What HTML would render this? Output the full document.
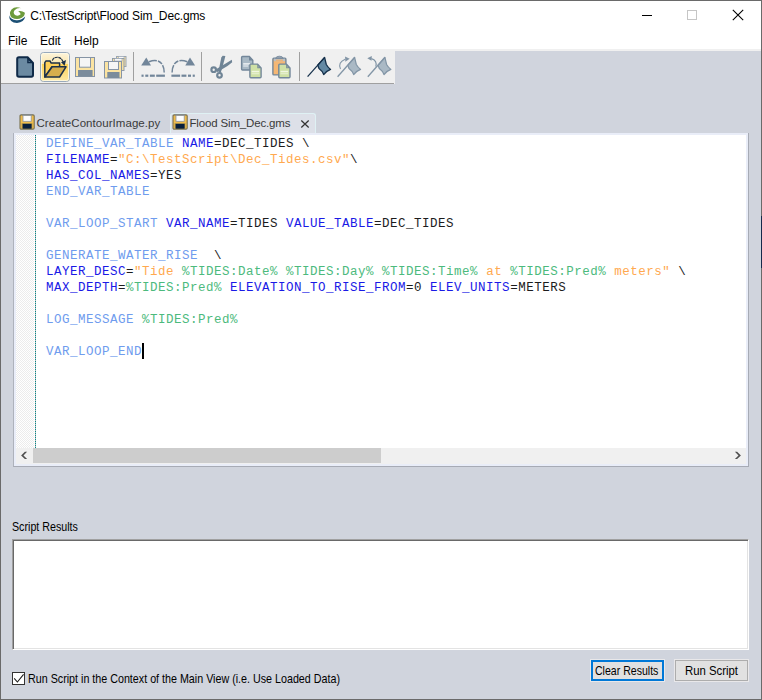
<!DOCTYPE html>
<html>
<head>
<meta charset="utf-8">
<title>Flood Sim_Dec.gms</title>
<style>
html,body{margin:0;padding:0;}
body{width:762px;height:700px;overflow:hidden;position:relative;background:#d0d4dd;font-family:"Liberation Sans",sans-serif;}
.abs{position:absolute;}
#win{position:absolute;left:0;top:0;width:762px;height:700px;background:#d0d4dd;overflow:hidden;}
.bd{position:absolute;background:#6a6a6a;}
#title{position:absolute;left:1px;top:1px;width:760px;height:30px;background:#fff;}
#title .txt{position:absolute;left:29.2px;top:8px;font-size:12px;line-height:15px;color:#000;white-space:nowrap;letter-spacing:-0.14px;}
#menu{position:absolute;left:1px;top:31px;width:760px;height:18px;background:#fff;}
#menu span{position:absolute;top:3px;font-size:12px;line-height:15px;color:#000;}
#tbline{position:absolute;left:1px;top:49px;width:760px;height:2px;background:#f0f0f0;}
#toolbar{position:absolute;left:1px;top:49px;width:394px;height:35px;background:#f0f0f0;}
#tbbot{position:absolute;left:1px;top:83px;width:393px;height:1px;background:#a0a0a0;}
.sep{position:absolute;top:52px;width:1px;height:29px;background:#a0a0a0;}
.tab{position:absolute;font-size:11.5px;line-height:15px;color:#3a3a3a;white-space:nowrap;}
#acttab{position:absolute;left:170px;top:113px;width:144px;height:20px;border:1px solid #dff1f4;border-bottom:none;border-radius:3px 3px 0 0;background:#dde0e8;}
#editor{position:absolute;left:13px;top:133px;width:734px;height:333px;background:#e9edf8;border-left:1px solid #aeb2bc;border-right:1px solid #a7abb5;border-bottom:1px solid #a7abb5;}
#edin{position:absolute;left:2px;top:2px;width:730px;height:329px;background:#fff;overflow:hidden;}
#gutter{position:absolute;left:0;top:0;width:18px;height:313px;background:conic-gradient(#ececec 25%,#fff 0 50%,#ececec 0 75%,#fff 0);background-size:2px 2px;}
#gline{position:absolute;left:19px;top:0;width:1px;height:313px;background:repeating-linear-gradient(to bottom,#008b8b 0,#008b8b 1px,#c4bcbc 1px,#c4bcbc 2px);}
#code{position:absolute;left:30px;top:1px;font-family:"Liberation Mono",monospace;font-size:12.5px;letter-spacing:0.5px;line-height:16px;white-space:pre;color:#1c1c1c;}
.k{color:#6f9cee;}
.p{color:#1a1ae6;}
.s{color:#ffa94f;}
.v{color:#4cba7d;}
#caret{position:absolute;left:126px;top:208px;width:2px;height:16px;background:#000;}
#hscroll{position:absolute;left:0;top:313px;width:730px;height:16px;background:#f0f0f0;}
#hthumb{position:absolute;left:17px;top:0;width:348px;height:15px;background:#cdcdcd;}
#lbl{position:absolute;left:11.5px;top:520px;font-size:12.4px;line-height:15px;color:#000;white-space:nowrap;transform:scaleX(0.862);transform-origin:0 0;}
#results{position:absolute;left:12px;top:539px;width:735px;height:109px;background:#fff;border:1px solid;border-color:#a0a0a0 #fff #fff #a0a0a0;box-shadow:inset 1px 1px 0 #696969,inset -1px -1px 0 #e3e3e3;}
#chk{position:absolute;left:12px;top:672px;width:11px;height:11px;border:1px solid #333;background:#fff;}
#chklbl{position:absolute;left:28px;top:672px;font-size:12.4px;line-height:15px;color:#000;white-space:nowrap;transform:scaleX(0.865);transform-origin:0 0;}
.btn{position:absolute;top:659px;height:21px;background:#e1e1e1;border:1px solid #e9e8ea;}
.btn span{position:absolute;top:4px;font-size:12.4px;line-height:15px;color:#000;white-space:nowrap;transform-origin:0 0;}
</style>
</head>
<body>
<div id="win">
  <div id="title">
    <div class="txt">C:\TestScript\Flood Sim_Dec.gms</div>
    <svg class="abs" style="left:7px;top:5px" width="20" height="20" viewBox="8 6 20 20">
      <path d="M9,15.2 Q9.3,22.8 17,23 Q24.2,22.6 25.2,16.6 Q21.5,20.6 16.2,20.2 Q10.8,19.6 9,15.2 Z" fill="#1b4f74"/>
      <path d="M21.4,8.2 Q15.2,5.6 11.5,9.4 Q8.4,13.6 11.6,17.4 Q16.6,20.6 21.8,17.8 Q25.6,15.2 24.6,12.6 Q22,10.4 18.2,11.2 Q21.2,13 20.4,14.6 Q18,16.6 15,15 Q12.6,13 14.6,10.2 Q17.2,7.6 21.4,8.2 Z" fill="#6d9b3c"/>
    </svg>
    <div class="abs" style="left:641px;top:14px;width:10px;height:1px;background:#000"></div>
    <div class="abs" style="left:686px;top:9px;width:8px;height:8px;border:1px solid #c6c6c6"></div>
    <svg class="abs" style="left:731px;top:8px" width="12" height="12" viewBox="0 0 12 12"><path d="M0.8,0.8 L11.2,11.2 M11.2,0.8 L0.8,11.2" stroke="#000" stroke-width="1.1" fill="none"/></svg>

  </div>
  <div id="menu">
    <span style="left:7px">File</span><span style="left:39px">Edit</span><span style="left:73px">Help</span>
  </div>
  <div id="tbline"></div>
  <div id="toolbar"></div><div id="tbbot"></div>
  <svg class="abs" style="left:0;top:50px" width="396" height="34" viewBox="0 50 396 34">
  <defs>
    <linearGradient id="hot" x1="0" y1="0" x2="0" y2="1">
      <stop offset="0" stop-color="#fdf4dc"/>
      <stop offset="0.40" stop-color="#fbe8b0"/>
      <stop offset="0.40" stop-color="#fdd256"/>
      <stop offset="1" stop-color="#fde9a6"/>
    </linearGradient>
  </defs>
  <!-- new -->
  <path d="M19,57.3 L27.6,57.3 L33,62.9 L33,75 Q33,76.7 31.3,76.7 L19,76.7 Q17.2,76.7 17.2,75 L17.2,59 Q17.2,57.3 19,57.3 Z" fill="#6b8aa2" stroke="#0f2a48" stroke-width="2" stroke-linejoin="round"/>
  <path d="M27.2,57.3 L27.2,63.3 L33,63.3 Z" fill="#0f2a48"/>
  <path d="M28.6,60.3 L28.6,62 L30.4,62 Z" fill="#5d7c96"/>
  <!-- open (hot) -->
  <rect x="40.5" y="52.5" width="29" height="29" rx="3" fill="url(#hot)" stroke="#98a9bc"/>
  <rect x="41.5" y="53.5" width="27" height="27" rx="2" fill="none" stroke="#fffbe9" stroke-opacity="0.8"/>
  <path d="M44.8,77 L44.8,62.6 L46,60.9 L50,60.9 L51,62.9 L59.6,62.9 L59.6,66.8 L52,66.8 Z" fill="#fdcf58" stroke="#1c3049" stroke-width="1.5" stroke-linejoin="round"/>
  <path d="M44.8,77 L52.2,66.8 L66,66.8 L59.6,77 Z" fill="#d6ae4e" stroke="#1c3049" stroke-width="1.5" stroke-linejoin="round"/>
  <path d="M52.3,60.6 Q53.4,57.2 57.4,57.2 Q61.4,57.4 63.2,62" fill="none" stroke="#1c3049" stroke-width="1.15" stroke-dasharray="3.2 0.5"/>
  <path d="M61,62.2 L66.1,60 L64.6,65.8 Z" fill="#1c3049"/>
  <!-- save (disabled) -->
  <rect x="75.5" y="57.5" width="19" height="19" fill="#fbe3a1" stroke="#8694a5"/>
  <rect x="79.5" y="57.5" width="11" height="9.7" fill="#f5f5f5" stroke="#8694a5"/>
  <rect x="78" y="70" width="14.6" height="6.5" fill="#7b8c9c"/>
  <!-- save all (disabled) -->
  <rect x="116.5" y="56.5" width="9.5" height="10" fill="#f4dfa8" stroke="#9aa5b2"/>
  <rect x="118.5" y="56.5" width="5.5" height="2" fill="#f8f8f8" stroke="#9aa5b2" stroke-width="0.6"/>
  <rect x="112.5" y="58.5" width="11.5" height="12" fill="#f7e0a0" stroke="#8f9cab"/>
  <rect x="114.5" y="58.5" width="7.5" height="2.5" fill="#f8f8f8" stroke="#8f9cab" stroke-width="0.6"/>
  <rect x="104.5" y="61.5" width="17" height="16.5" fill="#fbe3a1" stroke="#8694a5"/>
  <rect x="108.5" y="61.5" width="10" height="8" fill="#f5f5f5" stroke="#8694a5"/>
  <rect x="107.3" y="72" width="12.2" height="6" fill="#7b8c9c"/>
  <!-- undo -->
  <g fill="#72869a">
    <path d="M141.2,65.6 L146.3,57.6 L151,65.6 Z"/>
    <rect x="141.5" y="74.6" width="2.1" height="2.2"/>
    <rect x="145.3" y="74.6" width="3" height="2.2"/>
    <rect x="149.9" y="74.6" width="4.9" height="2.2"/>
    <rect x="156.2" y="74.6" width="8.7" height="2.2"/>
  </g>
  <path d="M149,61.8 Q157,58.5 161.5,63.5 Q164.3,67 164.2,72.6" fill="none" stroke="#72869a" stroke-width="1.5" stroke-dasharray="8 1.2 5 1.2 9"/>
  <!-- redo -->
  <g fill="#72869a">
    <path d="M195.1,65.6 L190,57.6 L185.3,65.6 Z"/>
    <rect x="192.7" y="74.6" width="2.1" height="2.2"/>
    <rect x="188" y="74.6" width="3" height="2.2"/>
    <rect x="181.5" y="74.6" width="4.9" height="2.2"/>
    <rect x="171.4" y="74.6" width="8.7" height="2.2"/>
  </g>
  <path d="M187.3,61.8 Q179.3,58.5 174.8,63.5 Q172,67 172.1,72.6" fill="none" stroke="#72869a" stroke-width="1.5" stroke-dasharray="8 1.2 5 1.2 9"/>
  <!-- cut -->
  <g fill="#6f8496">
    <path d="M221.3,57.4 L222.6,55.8 L225.4,56 L222.4,67.5 L220.6,73 L218.3,72.3 Z"/>
    <path d="M231.8,59.7 L232.2,62.3 L227.5,66 L217,72.2 L216,69.3 L224,64.5 Z"/>
  </g>
  <circle cx="213.7" cy="69.7" r="2.3" fill="none" stroke="#6f8496" stroke-width="2.2"/>
  <circle cx="219.5" cy="75.3" r="2.3" fill="none" stroke="#6f8496" stroke-width="2.2"/>
  <!-- copy -->
  <path d="M242.5,56.5 L249.3,56.5 L252.8,60.3 L252.8,69 Q252.8,70 251.8,70 L242.5,70 Q241.6,70 241.6,69 L241.6,57.5 Q241.6,56.5 242.5,56.5 Z" fill="#a9b9c5" stroke="#73879a" stroke-width="1.4"/>
  <path d="M249,56.5 L249,60.6 L252.8,60.6 Z" fill="#73879a"/>
  <rect x="243.2" y="63.2" width="7" height="1.4" fill="#f2f5f7"/>
  <rect x="243.2" y="65.4" width="5" height="1.2" fill="#e3e9ee"/>
  <path d="M250.8,64.1 L257.6,64.1 L261.1,67.9 L261.1,76.8 Q261.1,77.8 260.1,77.8 L250.8,77.8 Q249.9,77.8 249.9,76.8 L249.9,65.1 Q249.9,64.1 250.8,64.1 Z" fill="#cfe1a6" stroke="#73879a" stroke-width="1.4"/>
  <path d="M257.3,64.1 L257.3,68.2 L261.1,68.2 Z" fill="#73879a"/>
  <path d="M258.3,66.3 L258.3,67.3 L259.3,67.3 Z" fill="#cfe1a6"/>
  <rect x="251.6" y="70.8" width="7.6" height="1.5" fill="#f0f6e2"/>
  <rect x="251.6" y="73" width="7.6" height="1.3" fill="#e3eecb"/>
  <!-- paste -->
  <rect x="272.9" y="58.3" width="13" height="16.6" rx="1" fill="#f5b774" stroke="#73879a" stroke-width="1.4"/>
  <rect x="274" y="58.6" width="11" height="2.6" fill="#b8c1c9"/>
  <rect x="275.8" y="59.6" width="7.2" height="1.2" fill="#f0b06c"/>
  <path d="M275.6,58.4 Q276,56.2 279.4,56.2 Q282.8,56.2 283.2,58.4 Z" fill="#93a3b1" stroke="#73879a" stroke-width="0.8"/>
  <path d="M279.7,64.1 L286.5,64.1 L290,67.9 L290,76.8 Q290,77.8 289,77.8 L279.7,77.8 Q278.8,77.8 278.8,76.8 L278.8,65.1 Q278.8,64.1 279.7,64.1 Z" fill="#cfe1a6" stroke="#73879a" stroke-width="1.4"/>
  <path d="M286.2,64.1 L286.2,68.2 L290,68.2 Z" fill="#73879a"/>
  <path d="M287.2,66.3 L287.2,67.3 L288.2,67.3 Z" fill="#cfe1a6"/>
  <rect x="280.5" y="70.8" width="7.6" height="1.5" fill="#f0f6e2"/>
  <rect x="280.5" y="73" width="7.6" height="1.3" fill="#e3eecb"/>
  <!-- flag 1 -->
  <path d="M324.6,57.4 L326.3,64.5 Q327.5,67 330.6,69.4 Q326.5,70.8 323.7,74.6 Q322.5,71 319,68.5 L317.7,65.3 Z" fill="#6389a4" stroke="#15304b" stroke-width="1.3" stroke-linejoin="round"/>
  <path d="M307.6,76.7 L324.7,57.3" stroke="#15304b" stroke-width="1.25" fill="none"/>
  <!-- flag 2 -->
  <path d="M354.6,57.4 L356.3,64.5 Q357.5,67 360.6,69.4 Q356.5,70.8 353.7,74.6 Q352.5,71 349,68.5 L347.7,65.3 Z" fill="#aab9c5" stroke="#8295a6" stroke-width="1.2" stroke-linejoin="round"/>
  <path d="M337.6,76.7 L354.8,57.3" stroke="#8295a6" stroke-width="1.3" fill="none"/>
  <path d="M340.5,69 Q337.5,62.5 345.2,59.3" fill="none" stroke="#8295a6" stroke-width="1.1"/>
  <path d="M345,56.6 L349.7,58.8 L345.4,61.8 Z" fill="#8295a6"/>
  <!-- flag 3 -->
  <path d="M384.9,57.4 L386.6,64.5 Q387.8,67 390.9,69.4 Q386.8,70.8 384.0,74.6 Q382.8,71 379.3,68.5 L378.0,65.3 Z" fill="#aab9c5" stroke="#8295a6" stroke-width="1.2" stroke-linejoin="round"/>
  <path d="M367.8,76.7 L385,57.3" stroke="#8295a6" stroke-width="1.3" fill="none"/>
  <path d="M371.4,58.6 Q377.5,60.5 375.8,66.6" fill="none" stroke="#8295a6" stroke-width="1.1"/>
  <path d="M367.3,58.3 L371.8,56 L371.5,60.7 Z" fill="#8295a6"/>
</svg>
  <div class="sep" style="left:133px"></div>
  <div class="sep" style="left:201px"></div>
  <div class="sep" style="left:299px"></div>
  <div id="acttab"></div>
  <div class="tab" style="left:36.5px;top:116px;letter-spacing:0.05px">CreateContourImage.py</div>
  <div class="tab" style="left:189.5px;top:116px;letter-spacing:-0.16px">Flood Sim_Dec.gms</div>
  
  <svg class="abs" style="left:19px;top:114px" width="16" height="16" viewBox="0 0 16 16">
    <rect x="1" y="0.9" width="14.2" height="14.2" rx="1.2" fill="#f0bd4d" stroke="#77704f" stroke-width="1.1"/>
    <rect x="2.6" y="9" width="10.8" height="5.6" fill="#b3984c"/>
    <path d="M3,0.9 L13.2,0.9" stroke="#7f8a93" stroke-width="1.1"/>
    <rect x="4" y="1.6" width="8.2" height="5.7" fill="#fdfdfd" stroke="#8d959c" stroke-width="0.8"/>
    <rect x="3.6" y="9.9" width="9" height="4.8" fill="#071f3d"/>
  </svg>
  <svg class="abs" style="left:172px;top:114px" width="16" height="16" viewBox="0 0 16 16">
    <rect x="1" y="0.9" width="14.2" height="14.2" rx="1.2" fill="#f0bd4d" stroke="#77704f" stroke-width="1.1"/>
    <rect x="2.6" y="9" width="10.8" height="5.6" fill="#b3984c"/>
    <path d="M3,0.9 L13.2,0.9" stroke="#7f8a93" stroke-width="1.1"/>
    <rect x="4" y="1.6" width="8.2" height="5.7" fill="#fdfdfd" stroke="#8d959c" stroke-width="0.8"/>
    <rect x="3.6" y="9.9" width="9" height="4.8" fill="#071f3d"/>
  </svg>
  <svg class="abs" style="left:300px;top:118.5px" width="10" height="10" viewBox="0 0 10 10"><path d="M1.3,1.5 L8.7,8.5 M8.7,1.5 L1.3,8.5" stroke="#333" stroke-width="1.25" fill="none"/></svg>
  <div id="editor"><div id="edin">
    <div id="gutter"></div>
    <div id="gline"></div>
<div id="code"><span class="k">DEFINE_VAR_TABLE</span> <span class="p">NAME</span>=DEC_TIDES \
<span class="p">FILENAME</span>=<span class="s">"C:\TestScript\Dec_Tides.csv"</span>\
<span class="p">HAS_COL_NAMES</span>=YES
<span class="k">END_VAR_TABLE</span>

<span class="k">VAR_LOOP_START</span> <span class="p">VAR_NAME</span>=TIDES <span class="p">VALUE_TABLE</span>=DEC_TIDES

<span class="k">GENERATE_WATER_RISE</span>  \
<span class="p">LAYER_DESC</span>=<span class="s">"Tide </span><span class="v">%TIDES:Date%</span><span class="s"> </span><span class="v">%TIDES:Day%</span><span class="s"> </span><span class="v">%TIDES:Time%</span><span class="s"> at </span><span class="v">%TIDES:Pred%</span><span class="s"> meters"</span> \
<span class="p">MAX_DEPTH</span>=<span class="v">%TIDES:Pred%</span> <span class="p">ELEVATION_TO_RISE_FROM</span>=0 <span class="p">ELEV_UNITS</span>=METERS

<span class="k">LOG_MESSAGE</span> <span class="v">%TIDES:Pred%</span>

<span class="k">VAR_LOOP_END</span></div>
    <div id="caret"></div>
    <div id="hscroll"><div id="hthumb"></div><svg class="abs" style="left:4px;top:3px" width="8" height="9" viewBox="0 0 8 9"><path d="M1.1,4.4 L4.9,0.8 L7.1,0.8 L3.5,4.4 L7.1,8 L4.9,8 Z" fill="#505050"/></svg><svg class="abs" style="left:718px;top:3px" width="8" height="9" viewBox="0 0 8 9"><path d="M6.9,4.4 L3.1,0.8 L0.9,0.8 L4.5,4.4 L0.9,8 L3.1,8 Z" fill="#505050"/></svg></div>
  </div></div>
  <div id="lbl">Script Results</div>
  <div id="results"></div>
  <div id="chk"><svg class="abs" style="left:0;top:0" width="11" height="11" viewBox="0 0 11 11"><path d="M1.2,5.4 L4.4,9 L10.6,1.4" stroke="#1a1a1a" stroke-width="1.1" fill="none"/></svg></div>
  <div id="chklbl">Run Script in the Context of the Main View (i.e. Use Loaded Data)</div>
  <div class="btn" style="left:590px;width:73px;box-shadow:inset 0 0 0 2px #0078d7"><span style="left:4.2px;transform:scaleX(0.852)">Clear Results</span></div>
  <div class="btn" style="left:674px;width:73px;box-shadow:inset 0 0 0 1px #adadad"><span style="left:10.2px;transform:scaleX(0.915)">Run Script</span></div>
  <div class="bd" style="left:0;top:0;width:762px;height:1px"></div>
  <div class="bd" style="left:0;top:0;width:1px;height:700px"></div>
  <div class="bd" style="left:761px;top:0;width:1px;height:700px"></div>
  <div class="bd" style="left:0;top:699px;width:762px;height:1px"></div>
  <div class="abs" style="left:761px;top:216px;width:1px;height:52px;background:#16294a"></div>
</div>
</body>
</html>
